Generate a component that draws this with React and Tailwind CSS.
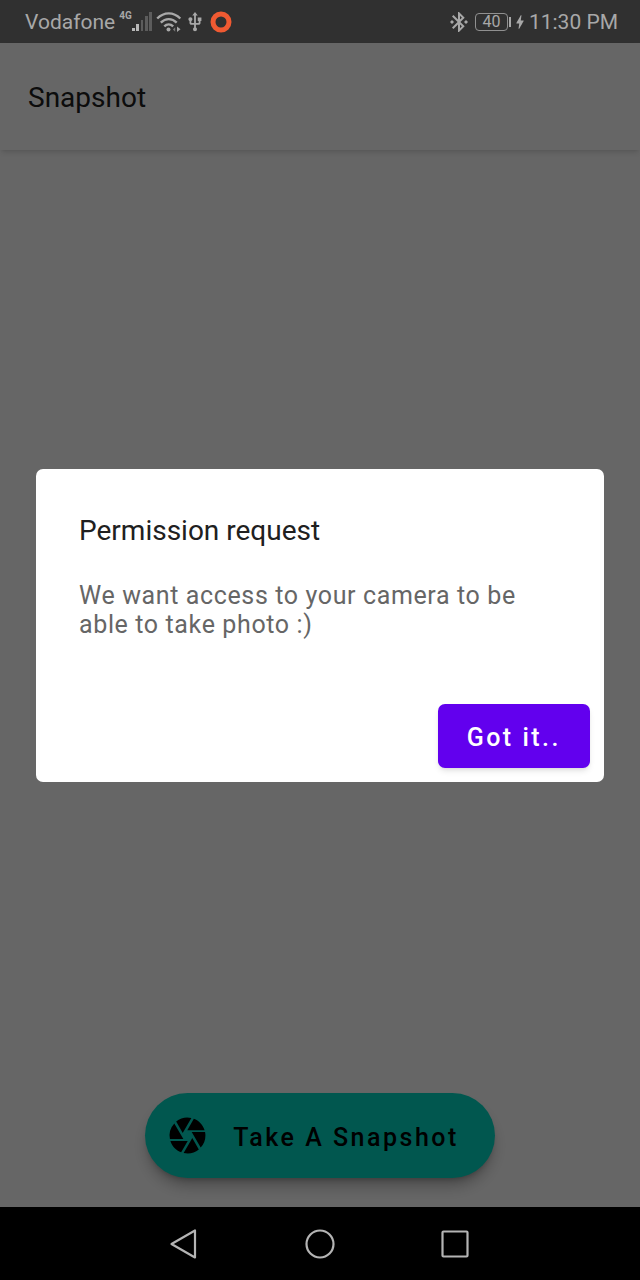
import { MdBluetoothConnected, MdBolt, MdCamera, MdUsb } from "react-icons/md";

function SignalIcon() {
  return (
    <svg viewBox="1 0 20 20" className="size-5" aria-hidden="true">
      <g fill="#b8b8b8">
        <rect x="1" y="16" width="3" height="3" />
        <rect x="5" y="12" width="3" height="7" />
      </g>
      <g fill="#5c5c5c">
        <rect x="10" y="8" width="2" height="11" />
        <rect x="14" y="4" width="3" height="15" />
        <rect x="18" y="0" width="3" height="19" />
      </g>
    </svg>
  );
}

function WifiIcon() {
  return (
    <svg viewBox="0 0 26 20" className="h-5 w-[26px]" fill="none" stroke="#a8a8a8" strokeWidth="2.400" aria-hidden="true">
      <path d="M1.200 6.500C8-.4 17.500-.4 24.300 6.500" />
      <path d="M4.800 10.600c4.700-4.600 11.200-4.600 15.900 0" />
      <path d="M8.300 14.300c2.600-2.500 6.200-2.500 8.900 0" />
      <circle cx="12.500" cy="17.500" r="2" fill="#a8a8a8" stroke="none" />
      <path d="M19.200 15.200v4.600l-2.300-2.300z" fill="#777777" stroke="none" />
      <path d="M21 14.600v5.400l3.500-2.700z" fill="#a8a8a8" stroke="none" />
    </svg>
  );
}

function StatusBar() {
  return (
    <header className="flex h-[43px] items-center justify-between bg-[#303030] pr-[22px] pl-[25px] text-[21px] leading-7 text-[#a8a8a8]">
      <div className="flex items-center">
        <span>Vodafone</span>
        <span className="mb-3 ml-1 text-[10px] leading-3 font-bold">4G</span>
        <SignalIcon />
        <span className="ml-1">
          <WifiIcon />
        </span>
        <MdUsb className="ml-0.5 size-[22px]" />
        <svg viewBox="0 0 22 22" className="ml-1 size-[22px]" fill="none" aria-hidden="true">
          <circle cx="11" cy="11" r="8" stroke="#f05a32" strokeWidth="5" />
        </svg>
      </div>
      <div className="flex items-center">
        <MdBluetoothConnected className="size-6" />
        <span className="ml-1 flex h-[18px] w-[33px] items-center justify-center rounded-sm border border-[#909090] text-base leading-4">
          40
        </span>
        <span className="ml-px h-2.5 w-0.5 bg-[#a8a8a8]" />
        <MdBolt className="size-[18px]" />
        <span>11:30 PM</span>
      </div>
    </header>
  );
}

function PermissionDialog() {
  return (
    <div className="absolute inset-0 flex items-center bg-black/60 px-9">
      <section
        role="dialog"
        aria-modal="true"
        aria-labelledby="dialog-title"
        className="flex w-full flex-col rounded-[7px] bg-white p-3.5"
      >
        <h2 id="dialog-title" className="px-[29px] pt-7 text-[28px] leading-10 text-[#202020]">
          Permission request
        </h2>
        <p className="px-[29px] pt-[30px] text-[25px] leading-[29px] tracking-wide text-[#666666]">
          We want access to your camera to be able to take photo :)
        </p>
        <button
          type="button"
          className="mt-[65px] h-16 self-end rounded-[7px] bg-[#6200ee] px-[29px] pt-1 text-[25px] font-medium tracking-widest text-white shadow-md"
        >
          Got it..
        </button>
      </section>
    </div>
  );
}

function NavigationBar() {
  return (
    <nav className="flex h-[73px] items-center justify-center gap-[103px] bg-black">
      <button type="button" aria-label="Back">
        <svg viewBox="0 0 32 32" className="size-8" fill="none" stroke="#b4b4b4" strokeWidth="2.200" strokeLinejoin="round">
          <path d="M26 2.500v27L2.500 16z" />
        </svg>
      </button>
      <button type="button" aria-label="Home">
        <svg viewBox="0 0 32 32" className="size-8" fill="none" stroke="#b4b4b4" strokeWidth="2.200">
          <circle cx="16" cy="16" r="13.500" />
        </svg>
      </button>
      <button type="button" aria-label="Recent apps">
        <svg viewBox="0 0 32 32" className="size-8" fill="none" stroke="#b4b4b4" strokeWidth="2.200">
          <rect x="3.500" y="3.500" width="25" height="25" rx="1" />
        </svg>
      </button>
    </nav>
  );
}

export default function App() {
  return (
    <div className="flex min-h-screen flex-col font-['Roboto',sans-serif]">
      <StatusBar />
      <div className="relative flex flex-1 flex-col bg-white">
        <div className="flex h-[107px] items-center px-7 pt-0.5 shadow-md">
          <h1 className="text-[28px] leading-9 text-[#202020]">Snapshot</h1>
        </div>
        <main className="flex flex-1 flex-col items-center justify-end pb-[29px]">
          <button
            type="button"
            className="flex h-[85px] items-center gap-6 rounded-full bg-[#03dac5] pr-9 pl-[21px] text-[25px] font-medium tracking-widest text-black shadow-lg shadow-black/30"
          >
            <MdCamera className="size-[43px]" />
            <span className="pt-1">Take A Snapshot</span>
          </button>
        </main>
        <PermissionDialog />
      </div>
      <NavigationBar />
    </div>
  );
}
